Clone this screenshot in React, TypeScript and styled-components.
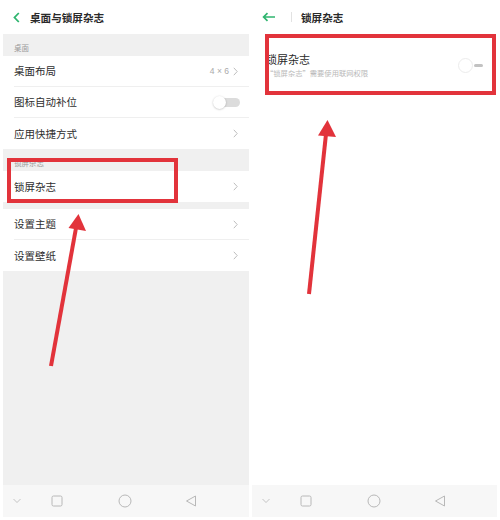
import styled, { createGlobalStyle } from "styled-components";

const GlobalStyle = createGlobalStyle`
    html, body {
        margin: 0;
        padding: 0;
        background: #ffffff;
    }
    body {
        font-family: "Noto Sans CJK SC", "Noto Sans", sans-serif;
        color: #333;
    }
`;

const GREEN = "#2fb56f";
const RED = "#e2333b";

const Chevron = ({ color = "#b5b5b5" }: { color?: string }) => (
    <svg width="5" height="9" viewBox="0 0 5 9">
        <path d="M0.8 0.8 L4.2 4.5 L0.8 8.2" fill="none" stroke={color} strokeWidth="0.9" />
    </svg>
);

const NavIcons = () => (
    <NavBar>
        <svg width="8" height="6" viewBox="0 0 8 6">
            <path d="M0.5 1 L4 4.5 L7.5 1" fill="none" stroke="#bdbdbd" strokeWidth="0.9" />
        </svg>
        <NavGap $w={30} />
        <svg width="12" height="12" viewBox="0 0 12 12">
            <rect x="1" y="1" width="10" height="10" rx="1.5" fill="none" stroke="#b8b8b8" strokeWidth="1" />
        </svg>
        <NavGap $w={55} />
        <svg width="14" height="14" viewBox="0 0 14 14">
            <circle cx="7" cy="7" r="6" fill="none" stroke="#b8b8b8" strokeWidth="1" />
        </svg>
        <NavGap $w={53} />
        <svg width="12" height="12" viewBox="0 0 12 12">
            <path d="M10.5 1 L1.5 6 L10.5 11 Z" fill="none" stroke="#b8b8b8" strokeWidth="1" strokeLinejoin="round" />
        </svg>
    </NavBar>
);

const App = () => {
    return (
        <Page>
            <GlobalStyle />
            <LeftPanel>
                <Header>
                    <svg width="7" height="11" viewBox="0 0 7 11">
                        <path d="M5.8 1 L1.5 5.5 L5.8 10" fill="none" stroke={GREEN} strokeWidth="1.8" />
                    </svg>
                    <Title>桌面与锁屏杂志</Title>
                </Header>
                <SectionLabel>桌面</SectionLabel>
                <Row>
                    <RowText>桌面布局</RowText>
                    <RowValue>
                        4 × 6 <Chevron />
                    </RowValue>
                </Row>
                <Row>
                    <RowText>图标自动补位</RowText>
                    <Toggle>
                        <Knob />
                    </Toggle>
                </Row>
                <Row $last>
                    <RowText>应用快捷方式</RowText>
                    <Chevron />
                </Row>
                <SectionLabel>锁屏杂志</SectionLabel>
                <Row $last>
                    <RowText>锁屏杂志</RowText>
                    <Chevron />
                </Row>
                <Spacer />
                <Row>
                    <RowText>设置主题</RowText>
                    <Chevron />
                </Row>
                <Row $last>
                    <RowText>设置壁纸</RowText>
                    <Chevron />
                </Row>
                <Filler />
                <NavIcons />
            </LeftPanel>

            <RightPanel>
                <Header>
                    <svg width="14" height="10" viewBox="0 0 14 10">
                        <path d="M13 5 H2 M5.5 1.2 L1.6 5 L5.5 8.8" fill="none" stroke={GREEN} strokeWidth="1.7" />
                    </svg>
                    <HeaderDivider />
                    <Title>锁屏杂志</Title>
                </Header>
                <SwitchRow>
                    <div>
                        <SwitchTitle>锁屏杂志</SwitchTitle>
                        <SwitchHint>“锁屏杂志”需要使用联网权限</SwitchHint>
                    </div>
                    <OffSwitch>
                        <OffKnob />
                        <OffBar />
                    </OffSwitch>
                </SwitchRow>
                <WhiteFiller />
                <NavIcons />
            </RightPanel>

            <Highlight $x={7} $y={158} $w={171} $h={45} />
            <Highlight $x={265} $y={34} $w={231} $h={61} />

            <Annotations width="500" height="520" viewBox="0 0 500 520">
                <line x1="51" y1="366" x2="76" y2="228" stroke={RED} strokeWidth="4" />
                <path d="M78.5 214 L86 231 L68.5 228 Z" fill={RED} />
                <line x1="309" y1="294" x2="326" y2="134" stroke={RED} strokeWidth="4" />
                <path d="M327.5 120 L336 137 L318 135.5 Z" fill={RED} />
            </Annotations>
        </Page>
    );
};

const Page = styled.div`
    position: relative;
    width: 500px;
    height: 520px;
    display: flex;
    gap: 3px;
    padding: 0 3px 3px 3px;
    box-sizing: border-box;
    overflow: hidden;
`;

const Panel = styled.div`
    display: flex;
    flex-direction: column;
    height: 100%;
`;

const LeftPanel = styled(Panel)`
    width: 246px;
`;

const RightPanel = styled(Panel)`
    width: 245px;
`;

const Header = styled.div`
    height: 34px;
    display: flex;
    align-items: center;
    gap: 10px;
    padding-left: 10px;
    background: #fff;
    flex-shrink: 0;
`;

const Title = styled.span`
    font-size: 10.6px;
    font-weight: 700;
    color: #2a2a2a;
`;

const HeaderDivider = styled.span`
    width: 1px;
    height: 10px;
    background: #e2e2e2;
    margin: 0 -1px 0 5px;
`;

const SectionLabel = styled.div`
    height: 22px;
    background: #f0f0f0;
    font-size: 7.5px;
    line-height: 10px;
    color: #9a9a9a;
    padding: 9px 0 0 11px;
    box-sizing: border-box;
    flex-shrink: 0;
`;

const Row = styled.div<{ $last?: boolean }>`
    height: 31px;
    box-sizing: border-box;
    display: flex;
    align-items: center;
    justify-content: space-between;
    margin-left: 11px;
    padding-right: 11px;
    border-bottom: ${(p) => (p.$last ? "none" : "1px solid #efefef")};
    background: #fff;
    flex-shrink: 0;
`;

const RowText = styled.span`
    font-size: 10.5px;
    line-height: 14px;
    color: #2e2e2e;
`;

const RowValue = styled.span`
    display: flex;
    align-items: center;
    gap: 4px;
    font-size: 8.5px;
    color: #aaa;
    font-family: "Liberation Sans", sans-serif;
`;

const Toggle = styled.div`
    position: relative;
    width: 26px;
    height: 9px;
    border-radius: 5px;
    background: #dcdcdc;
    margin-right: -2px;
`;

const Knob = styled.div`
    position: absolute;
    left: -1px;
    top: -2px;
    width: 13px;
    height: 13px;
    border-radius: 50%;
    background: #fff;
    box-shadow: 0 0.5px 2px rgba(0, 0, 0, 0.25);
`;

const Spacer = styled.div`
    height: 7px;
    background: #f0f0f0;
    flex-shrink: 0;
`;

const Filler = styled.div`
    flex: 1;
    background: #f0f0f0;
`;

const WhiteFiller = styled.div`
    flex: 1;
    background: #fff;
`;

const NavBar = styled.div`
    height: 32px;
    display: flex;
    align-items: center;
    padding-left: 10px;
    background: #f7f7f7;
    flex-shrink: 0;
`;

const NavGap = styled.span<{ $w: number }>`
    width: ${(p) => p.$w}px;
    flex-shrink: 0;
`;

const SwitchRow = styled.div`
    height: 56px;
    display: flex;
    align-items: center;
    justify-content: space-between;
    padding: 0 14px 0 14px;
    margin-top: 3px;
`;

const SwitchTitle = styled.div`
    font-size: 11px;
    color: #2a2a2a;
    line-height: 16px;
`;

const SwitchHint = styled.div`
    font-size: 7.3px;
    color: #b9b9b9;
    line-height: 12px;
`;

const OffSwitch = styled.div`
    display: flex;
    align-items: center;
`;

const OffKnob = styled.div`
    width: 13px;
    height: 13px;
    border-radius: 50%;
    border: 1px solid #ececec;
    background: #fff;
`;

const OffBar = styled.div`
    width: 9px;
    height: 3px;
    border-radius: 1.5px;
    background: #c2c2c2;
    margin-left: 1px;
`;

const Highlight = styled.div<{ $x: number; $y: number; $w: number; $h: number }>`
    position: absolute;
    left: ${(p) => p.$x}px;
    top: ${(p) => p.$y}px;
    width: ${(p) => p.$w}px;
    height: ${(p) => p.$h}px;
    border: 4px solid ${RED};
    box-sizing: border-box;
    pointer-events: none;
`;

const Annotations = styled.svg`
    position: absolute;
    left: 0;
    top: 0;
    pointer-events: none;
`;

export default App;
